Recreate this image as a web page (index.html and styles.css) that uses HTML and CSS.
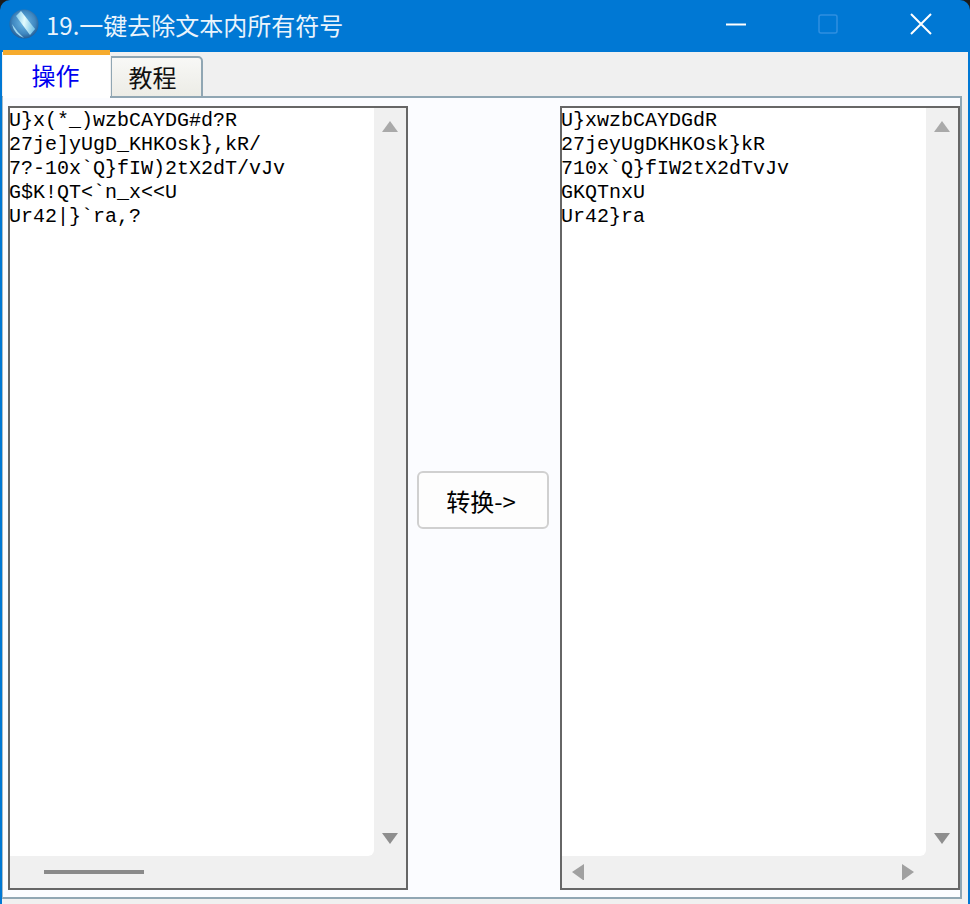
FILE: index.html
```html
<!DOCTYPE html>
<html lang="zh">
<head>
<meta charset="utf-8">
<title>19.一键去除文本内所有符号</title>
<link rel="stylesheet" href="styles.css">
</head>
<body>
<div class="window">
  <header class="titlebar">
    <svg class="app-icon" width="30" height="30" viewBox="0 0 30 30" aria-hidden="true">
      <defs>
        <radialGradient id="orb" cx="0.5" cy="0.45" r="0.6">
          <stop offset="0" stop-color="#6fb9e6"/>
          <stop offset="0.65" stop-color="#3f87c0"/>
          <stop offset="1" stop-color="#1d4f86"/>
        </radialGradient>
        <linearGradient id="streak" x1="0" y1="0" x2="1" y2="0.2">
          <stop offset="0" stop-color="#7fc8ea"/>
          <stop offset="0.5" stop-color="#e4fbfd"/>
          <stop offset="1" stop-color="#7fc8ea"/>
        </linearGradient>
      </defs>
      <circle cx="15" cy="15" r="14.500" fill="url(#orb)"/>
      <path d="M7 7 L12 2 L26 20 L21 26 Z" fill="url(#streak)"/>
      <path d="M3 15 Q5 25 15 29 Q8 23 3 15 Z" fill="#9fd7ef"/>
    </svg>
    <span class="title">19.一键去除文本内所有符号</span>
    <div class="controls">
      <svg class="ctl" width="22" height="22" viewBox="0 0 22 22" aria-hidden="true"><path d="M1 11.500 H21" stroke="#fff" stroke-width="2"/></svg>
      <svg class="ctl ctl-max" width="22" height="22" viewBox="0 0 22 22" aria-hidden="true"><rect x="2" y="2" width="18" height="18" rx="2" fill="none" stroke="#2f8fe0" stroke-width="1.500"/></svg>
      <svg class="ctl ctl-close" width="22" height="22" viewBox="0 0 22 22" aria-hidden="true"><path d="M1 1 L21 21 M21 1 L1 21" stroke="#fff" stroke-width="2"/></svg>
    </div>
  </header>
  <main class="client">
    <nav class="tabs">
      <div class="tab tab-active">操作</div>
      <div class="tab tab-idle">教程</div>
    </nav>
    <section class="panel">
      <div class="editor">
        <div class="editor-top">
          <pre class="text"><span class="text-inner">U}x(*_)wzbCAYDG#d?R
27je]yUgD_KHKOsk},kR/
7?-10x`Q}fIW)2tX2dT/vJv
G$K!QT&lt;`n_x&lt;&lt;U
Ur42|}`ra,?</span></pre>
          <div class="vscroll">
            <svg width="18" height="14" viewBox="0 0 18 14" aria-hidden="true"><path d="M9 1 L17 12 H1 Z" fill="#a9a9a9"/></svg>
            <svg width="18" height="14" viewBox="0 0 18 14" aria-hidden="true"><path d="M1 2 H17 L9 13 Z" fill="#8e8e8e"/></svg>
          </div>
        </div>
        <div class="hscroll hscroll-thumb"><div class="thumb"></div></div>
      </div>
      <div class="middle"><button class="convert" type="button">转换-&gt;</button></div>
      <div class="editor">
        <div class="editor-top">
          <pre class="text"><span class="text-inner">U}xwzbCAYDGdR
27jeyUgDKHKOsk}kR
710x`Q}fIW2tX2dTvJv
GKQTnxU
Ur42}ra</span></pre>
          <div class="vscroll">
            <svg width="18" height="14" viewBox="0 0 18 14" aria-hidden="true"><path d="M9 1 L17 12 H1 Z" fill="#a9a9a9"/></svg>
            <svg width="18" height="14" viewBox="0 0 18 14" aria-hidden="true"><path d="M1 2 H17 L9 13 Z" fill="#8e8e8e"/></svg>
          </div>
        </div>
        <div class="hscroll hscroll-arrows">
          <svg width="14" height="18" viewBox="0 0 14 18" aria-hidden="true"><path d="M13 1 V17 H12 L1 9 Z" fill="#a0a0a0"/></svg>
          <svg width="14" height="18" viewBox="0 0 14 18" aria-hidden="true"><path d="M1 1 V17 H2 L13 9 Z" fill="#a0a0a0"/></svg>
        </div>
      </div>
    </section>
  </main>
</div>
</body>
</html>
```
FILE: styles.css
```css
* { box-sizing: border-box; }
html, body { margin: 0; height: 100%; background: #1c1c1c; overflow: hidden; }
.window {
  height: 904px; display: flex; flex-direction: column;
  background: #0078d4; border-radius: 10px 10px 0 0; overflow: hidden;
  font-family: "Noto Sans CJK SC", "Liberation Sans", sans-serif;
}
.titlebar { height: 52px; flex: none; display: flex; align-items: center; padding: 0 0 0 9px; color: #fff; }
.app-icon { flex: none; margin-top: -4px; }
.title { margin-left: 7px; font-size: 24px; line-height: 50px; margin-bottom: 2px; color: #eaf4fc; }
.controls { margin-left: auto; display: flex; align-items: center; margin-top: -4px; padding-right: 38px; }
.ctl-max { margin-left: 70px; }
.ctl-close { margin-left: 71px; }
.client { flex: 1; margin: 0 2px; background: #f0f0f0; display: flex; flex-direction: column; padding-bottom: 5px; }
.tabs { height: 46px; flex: none; display: flex; align-items: flex-end; padding-left: 1px; position: relative; z-index: 1; margin-bottom: -2px; }
.tab { font-size: 24px; display: flex; align-items: center; justify-content: center; }
.tab-active { width: 107px; height: 48px; background: #fff; border-top: 5px solid #f6ab2e; color: #0000f0; padding: 0 2px 4px 0; }
.tab-idle { width: 92px; height: 42px; margin-left: 1px; color: #111; border: 2px solid #90a6b3; border-left: 1px solid #90a6b3; border-radius: 0 5px 0 0; background: linear-gradient(#f8f8f6, #ecece6); padding: 0 8px 2px 0; }
.panel {
  flex: 1; margin-right: 6px; display: flex; padding: 8px 0 7px 5px;
  border: 2px solid #90a6b3; border-left-color: #a9bcc8; border-left-width: 1px;
  background: #fbfcff; min-height: 0;
}
.editor { width: 400px; flex: none; border: 2px solid #666; display: flex; flex-direction: column; background: #f0f0f0; }
.editor-top { flex: 1; display: flex; min-height: 0; }
.text {
  flex: 1; margin: 0; padding: 1px 0 0; background: #fff; color: #000;
  font-family: "Liberation Mono", monospace; font-size: 20px; line-height: 24px; border-radius: 0 0 6px 0;
}
.text-inner { display: block; margin-left: -1px; }
.vscroll { width: 32px; flex: none; display: flex; flex-direction: column; justify-content: space-between; align-items: center; padding: 12px 0 11px; }
.hscroll { height: 32px; flex: none; display: flex; align-items: center; }
.hscroll-thumb { padding-left: 34px; }
.thumb { width: 100px; height: 4px; background: #8a8a8a; }
.hscroll-arrows { justify-content: space-between; padding: 0 43px 0 9px; }
.middle { width: 152px; flex: none; display: flex; align-items: center; justify-content: center; padding-right: 2px; }
.convert {
  width: 132px; height: 58px; margin-top: 4px; background: #fdfdfd; border: 2px solid #d0d0d0; border-radius: 6px;
  font: 24px "Noto Sans CJK SC", "Liberation Sans", sans-serif; color: #000; padding: 1px 4px 0 0;
}
```
